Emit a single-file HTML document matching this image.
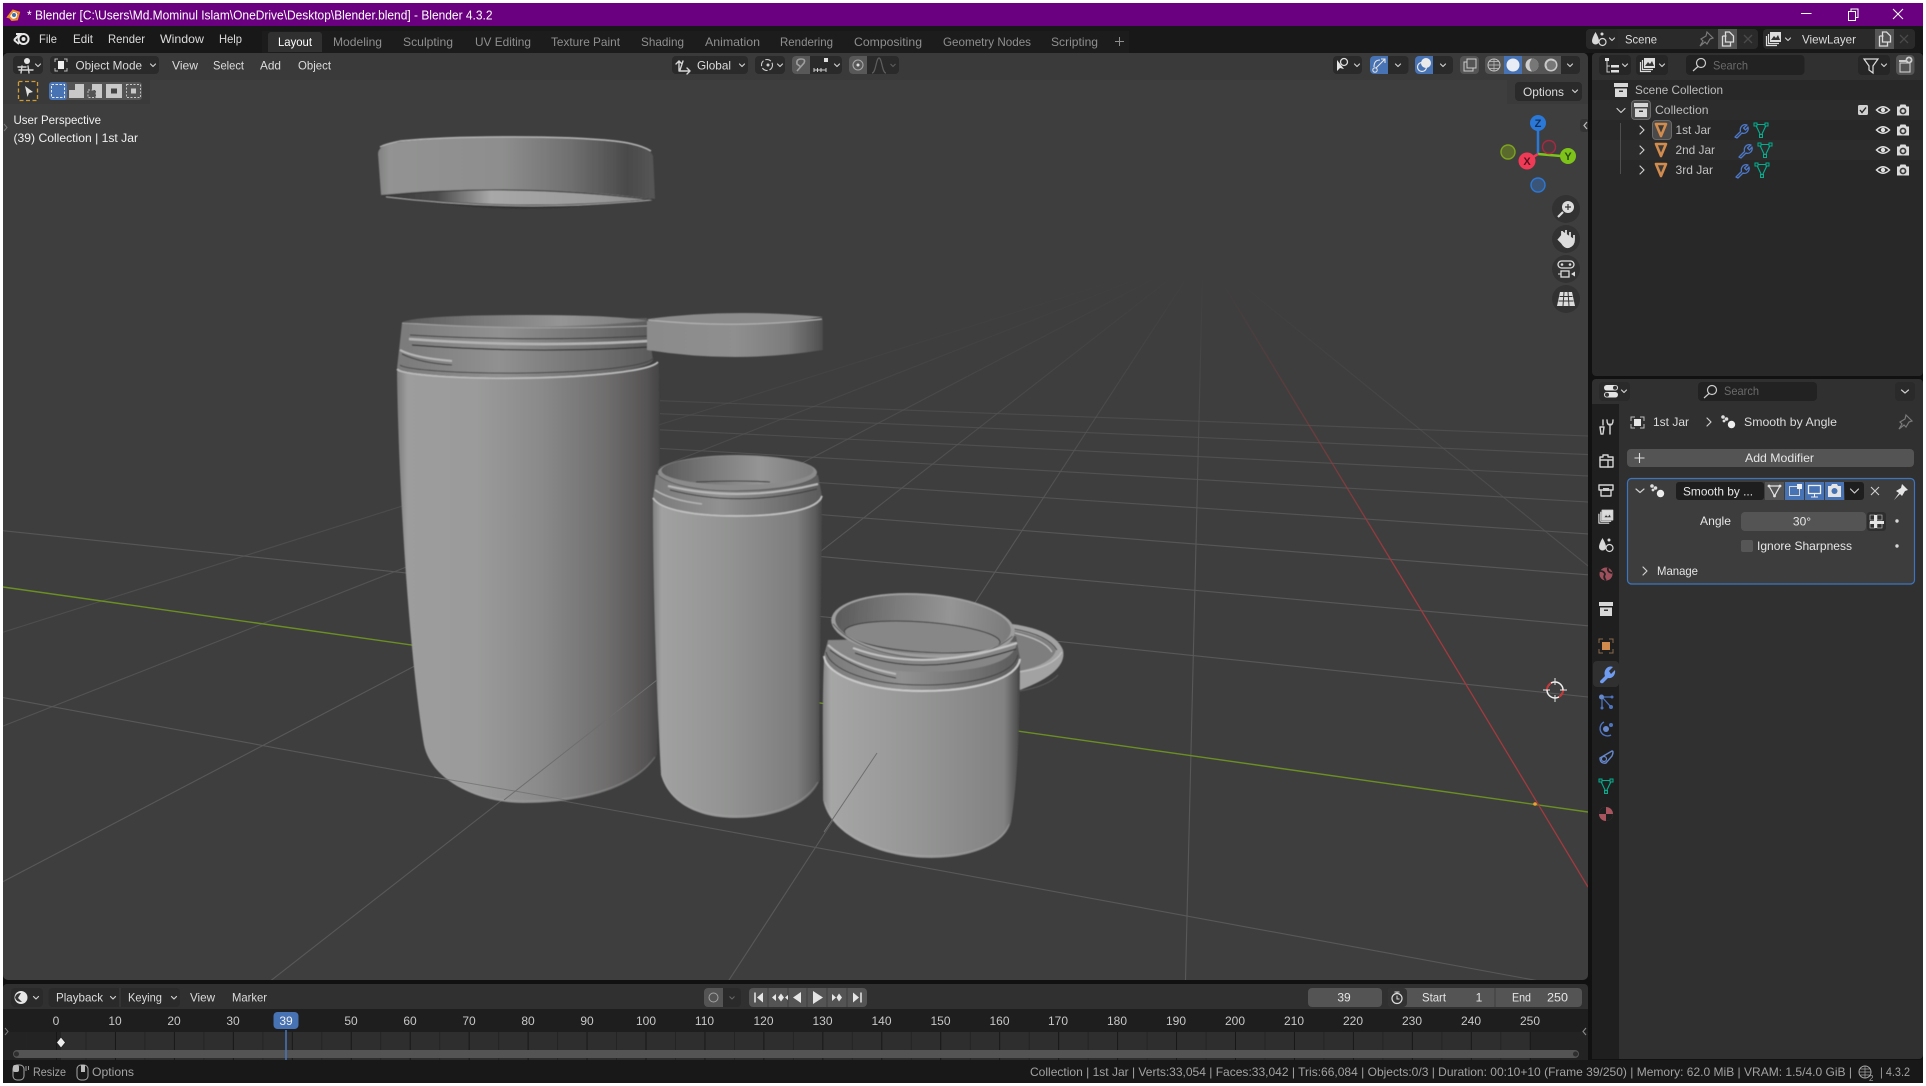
<!DOCTYPE html>
<html><head><meta charset="utf-8"><title>Blender</title>
<style>
html,body{margin:0;padding:0;background:#fff;overflow:hidden}
svg{display:block}
text{font-family:"Liberation Sans",sans-serif;font-size:12px;fill:#c8c8c8}
.m{fill:#dcdcdc}.t{fill:#8f8f8f}.s{fill:#a2a2a2}.w{fill:#e6e6e6}.d{fill:#6a6a6a}
.c{fill:none;stroke:#cfcfcf;stroke-width:1.2;stroke-linecap:round;stroke-linejoin:round}
.i{fill:none;stroke:#d4d4d4;stroke-width:1.4;stroke-linecap:round;stroke-linejoin:round}
.o{stroke:#6e6e6e;stroke-width:1;fill:none}
</style></head><body>
<svg xmlns="http://www.w3.org/2000/svg" width="1926" height="1086" viewBox="0 0 1926 1086">
<defs>
<filter id="soft" filterUnits="userSpaceOnUse" x="350" y="110" width="760" height="770"><feGaussianBlur stdDeviation=".55"/></filter>
<linearGradient id="gridfade" gradientUnits="userSpaceOnUse" x1="0" y1="270" x2="0" y2="560"><stop offset="0" stop-color="#555" stop-opacity="0"/><stop offset=".25" stop-color="#555" stop-opacity=".25"/><stop offset=".65" stop-color="#555" stop-opacity=".8"/><stop offset="1" stop-color="#585858"/></linearGradient>
<linearGradient id="j1"><stop offset="0" stop-color="#7d7d7d"/><stop offset=".04" stop-color="#9c9d9c"/><stop offset=".3" stop-color="#9a9b9a"/><stop offset=".55" stop-color="#8a8a8a"/><stop offset=".8" stop-color="#6f6d6d"/><stop offset=".95" stop-color="#565454"/><stop offset="1" stop-color="#444"/></linearGradient>
<linearGradient id="j2"><stop offset="0" stop-color="#808080"/><stop offset=".05" stop-color="#a0a1a0"/><stop offset=".45" stop-color="#929392"/><stop offset=".85" stop-color="#7d7d7d"/><stop offset=".96" stop-color="#5c5c5c"/><stop offset="1" stop-color="#454545"/></linearGradient>
<linearGradient id="j3"><stop offset="0" stop-color="#858585"/><stop offset=".04" stop-color="#a5a6a5"/><stop offset=".5" stop-color="#949594"/><stop offset=".92" stop-color="#828282"/><stop offset=".98" stop-color="#555"/><stop offset="1" stop-color="#444"/></linearGradient>
<linearGradient id="lid"><stop offset="0" stop-color="#808180"/><stop offset=".04" stop-color="#929392"/><stop offset=".45" stop-color="#8d8e8d"/><stop offset=".7" stop-color="#6f6f6f"/><stop offset=".9" stop-color="#4a4a4a"/><stop offset="1" stop-color="#565656"/></linearGradient>
<linearGradient id="lid2"><stop offset="0" stop-color="#8a8b8a"/><stop offset=".5" stop-color="#8e8f8e"/><stop offset=".8" stop-color="#7c7c7c"/><stop offset=".96" stop-color="#585858"/><stop offset="1" stop-color="#4c4c4c"/></linearGradient>
<linearGradient id="under"><stop offset="0" stop-color="#3a3a3a"/><stop offset=".2" stop-color="#4a4a4a"/><stop offset=".4" stop-color="#a8a8a8"/><stop offset=".8" stop-color="#9a9a9a"/><stop offset="1" stop-color="#8a8a8a"/></linearGradient>
<linearGradient id="in"><stop offset="0" stop-color="#5a5a5a"/><stop offset=".35" stop-color="#7c7c7c"/><stop offset=".65" stop-color="#959595"/><stop offset="1" stop-color="#7a7a7a"/></linearGradient>
<linearGradient id="neck"><stop offset="0" stop-color="#7a7a7a"/><stop offset=".4" stop-color="#919191"/><stop offset=".8" stop-color="#6e6e6e"/><stop offset="1" stop-color="#5a5a5a"/></linearGradient>
<linearGradient id="redfade" gradientUnits="userSpaceOnUse" x1="1222" y1="282" x2="1400" y2="575"><stop offset="0" stop-color="#8a3a3a" stop-opacity="0"/><stop offset="1" stop-color="#a23a3e"/></linearGradient>
<pattern id="ticks" patternUnits="userSpaceOnUse" x="56" y="0" width="58.95" height="100"><rect x="0" y="0" width="1" height="100" fill="#171717"/><rect x="29.5" y="0" width="1" height="100" fill="#232323"/></pattern>
<g id="eye"><path d="M-6.5 0Q0-6.5 6.5 0Q0 6.5-6.5 0Z" fill="none" stroke="#e0e0e0" stroke-width="1.5"/><circle r="2.2" fill="#e0e0e0"/></g>
<g id="cam"><path d="M-6-3.5h2.5l1-2h5l1 2H6v9H-6Z" fill="#dcdcdc"/><circle cy="1" r="3.4" fill="#3a3a3a"/><circle cy="1" r="1.7" fill="#dcdcdc"/></g>
<g id="wr"><path d="M-6 7L-.5 1.5C-1.5-2.5 1.5-6.5 6-5L2.5-2 4.5 0 7-3C8 1 4.5 4.5 1 3L-4 8Z" fill="none" stroke="#4d78c9" stroke-width="1.3" stroke-linejoin="round"/></g>
<g id="mt"><path d="M-5.5-5.5H5.500L0 6Z" fill="none" stroke="#00b090" stroke-width="1.1"/><rect x="-7" y="-7" width="3" height="3" fill="#282828" stroke="#00b090" stroke-width="1"/><rect x="4" y="-7" width="3" height="3" fill="#282828" stroke="#00b090" stroke-width="1"/><rect x="-1.500" y="4.500" width="3" height="3" fill="#282828" stroke="#00b090" stroke-width="1"/></g>
<g id="ot"><path d="M-5-6H5L0 6Z" fill="#3a3a3a" stroke="#d18b4c" stroke-width="2.6" stroke-linejoin="round"/></g>
<g id="coll"><path d="M-7-7H7V-3H-7Z" fill="#d8d8d8"/><path d="M-6-1.5H6V7H-6Z" fill="#d8d8d8"/><rect x="-2" y="0.5" width="4" height="1.5" fill="#333"/></g>
<g id="smooth"><circle cx="-5" cy="-5" r="1.8" fill="#ddd"/><circle cx="-1.5" cy="-3" r="1.8" fill="#ddd"/><circle cx="-4" cy="-1" r="1.4" fill="#ddd"/><circle cx="3.5" cy="2.5" r="3.7" fill="#eee"/></g>
<g id="vl"><rect x="-4" y="-7" width="11" height="10" fill="#ddd"/><path d="M-3 1L0-3 2-1 4-4 6 1Z" fill="#333"/><path d="M-5.5-5V4.5H5M-7.5-3V6.5H3" fill="none" stroke="#ddd" stroke-width="1.2"/></g>
<g id="sc"><path d="M-3.5-7Q-7-1-7 2A3.500 3.500 0 0 0 0 2Q0-1-3.5-7Z" fill="#d8d8d8"/><circle cx="3.5" cy="3" r="3.5" fill="none" stroke="#d8d8d8" stroke-width="1.2"/><circle cx="3" cy="-5" r="1.5" fill="#d8d8d8"/></g>
<g id="copy"><path d="M-5-3H-1M-5-3V7H3V3M-2-7H2L6-3V3H-2Z" fill="none" stroke="#dcdcdc" stroke-width="1.3"/></g>
<g id="pin"><path d="M1-7L7-1 4 0 1 5-1 3-6 7-3 2-5 0 0-3Z" fill="none" stroke="#7a7a7a" stroke-width="1.2"/></g>
</defs>

<rect width="1926" height="1086" fill="#fff"/>
<rect x="3" y="3" width="1920" height="1080" fill="#111"/>
<rect x="3" y="3" width="1920" height="23" fill="#6a007f"/>
<rect x="3" y="26" width="1920" height="27" fill="#181818"/>

<!-- title bar -->
<circle cx="13.5" cy="15" r="4" fill="#f5f5f5"/><circle cx="14" cy="15" r="2" fill="#3f6fa8"/><path d="M8 17L13 10.5 19 12.5 17 19.5 12 20 10 17.5Z" fill="none" stroke="#ec8a24" stroke-width="2"/>
<text x="27" y="19.5" class="w" style="font-size:13px;fill:#fff" textLength="465.5" lengthAdjust="spacingAndGlyphs">* Blender [C:\Users\Md.Mominul Islam\OneDrive\Desktop\Blender.blend] - Blender 4.3.2</text>
<path d="M1801 13.5H1811.5" stroke="#fff" stroke-width="1"/>
<path d="M1848.5 11.5H1855.5V20.5H1848.5ZM1851 11.5V9H1858V17.5H1855.5" fill="none" stroke="#fff" stroke-width="1"/>
<path d="M1893 9L1903 19M1903 9L1893 19" stroke="#fff" stroke-width="1"/>

<!-- top bar -->
<g transform="translate(21,39)"><circle cx="2.5" cy="0" r="5" fill="none" stroke="#e8e8e8" stroke-width="2"/><circle cx="2.5" cy="0" r="2" fill="#e8e8e8"/><path d="M-7 1L-1-5H-5M-7 1L-2 5" fill="none" stroke="#e8e8e8" stroke-width="2"/></g>
<text x="39" y="43" class="m" textLength="18" lengthAdjust="spacingAndGlyphs">File</text>
<text x="73" y="43" class="m" textLength="20" lengthAdjust="spacingAndGlyphs">Edit</text>
<text x="108" y="43" class="m" textLength="37" lengthAdjust="spacingAndGlyphs">Render</text>
<text x="160" y="43" class="m" textLength="44" lengthAdjust="spacingAndGlyphs">Window</text>
<text x="219" y="43" class="m" textLength="23" lengthAdjust="spacingAndGlyphs">Help</text>
<rect x="262" y="31" width="867" height="22" fill="#1c1c1c"/>
<path d="M268 52V35a3 3 0 0 1 3-3H319a3 3 0 0 1 3 3V52Z" fill="#303030"/>
<text x="278" y="46" class="w" style="fill:#fff" textLength="34" lengthAdjust="spacingAndGlyphs">Layout</text>
<text x="333" y="46" class="t" textLength="49" lengthAdjust="spacingAndGlyphs">Modeling</text>
<text x="403" y="46" class="t" textLength="50" lengthAdjust="spacingAndGlyphs">Sculpting</text>
<text x="475" y="46" class="t" textLength="56" lengthAdjust="spacingAndGlyphs">UV Editing</text>
<text x="551" y="46" class="t" textLength="69" lengthAdjust="spacingAndGlyphs">Texture Paint</text>
<text x="641" y="46" class="t" textLength="43" lengthAdjust="spacingAndGlyphs">Shading</text>
<text x="705" y="46" class="t" textLength="55" lengthAdjust="spacingAndGlyphs">Animation</text>
<text x="780" y="46" class="t" textLength="53" lengthAdjust="spacingAndGlyphs">Rendering</text>
<text x="854" y="46" class="t" textLength="68" lengthAdjust="spacingAndGlyphs">Compositing</text>
<text x="943" y="46" class="t" textLength="88" lengthAdjust="spacingAndGlyphs">Geometry Nodes</text>
<text x="1051" y="46" class="t" textLength="47" lengthAdjust="spacingAndGlyphs">Scripting</text>
<path d="M1115 41.5H1124M1119.500 37V46" stroke="#8f8f8f" stroke-width="1"/>

<!-- scene/viewlayer -->
<rect x="1586" y="29" width="172" height="20" rx="4" fill="#2a2a2a"/>
<rect x="1586" y="29" width="32" height="20" rx="4" fill="#282828"/>
<use href="#sc" transform="translate(1599,39)"/><path class="c" d="M1609.5 38l2.5 2.5 2.5-2.5"/>
<text x="1625" y="43.5" class="m" textLength="32" lengthAdjust="spacingAndGlyphs">Scene</text>
<use href="#pin" transform="translate(1706,39)"/>
<rect x="1718" y="29" width="19" height="20" fill="#555"/><use href="#copy" transform="translate(1727.5,39)"/>
<path d="M1744 35L1752 43M1752 35L1744 43" stroke="#4a4a4a" stroke-width="1.3"/>
<rect x="1763" y="29" width="152" height="20" rx="4" fill="#2a2a2a"/>
<use href="#vl" transform="translate(1774,39)"/><path class="c" d="M1785.5 38l2.5 2.5 2.5-2.5"/>
<text x="1802" y="43.5" class="m" textLength="54" lengthAdjust="spacingAndGlyphs">ViewLayer</text>
<rect x="1875" y="29" width="19" height="20" fill="#555"/><use href="#copy" transform="translate(1884.5,39)"/>
<path d="M1900 35L1908 43M1908 35L1900 43" stroke="#4a4a4a" stroke-width="1.3"/>

<!-- VIEWPORT -->
<clipPath id="vp"><rect x="3" y="53" width="1585" height="927" rx="5"/></clipPath>
<g clip-path="url(#vp)">
<rect x="3" y="53" width="1585" height="927" fill="#3e3e3e"/>
<!-- grid family B (to VP 1203,253) -->
<g fill="none" stroke="url(#gridfade)" stroke-width="1.1">
<path d="M246 1000L1203 253"/><path d="M716 1000L1203 253"/><path d="M1185 1000L1203 253"/>
<path d="M-223 1000L1203 253"/><path d="M-692 1000L1203 253" opacity=".8"/><path d="M-1161 1000L1203 253" opacity=".6"/>
<path d="M2122 1000L1203 253" opacity=".7"/>
</g>
<!-- grid family A (to VP -2634,211) -->
<g fill="none" stroke="url(#gridfade)" stroke-width="1.1">
<path d="M3 697.600L1588 990"/>
<path d="M3 530.700L1588 697"/>
<path d="M660 542L1588 625.800"/>
<path d="M660 502L1588 574.800"/>
<path d="M660 472L1588 533.900"/>
<path d="M660 448.400L1588 502"/>
<path d="M660 429.800L1588 476"/>
<path d="M660 413.700L1588 454.600"/>
<path d="M660 400.700L1588 436"/>
</g>
<!-- axes -->
<path d="M3 587L1588 812" stroke="#6b8f22" stroke-width="1.4"/>
<path d="M1222 282L1400 575" stroke="url(#redfade)" stroke-width="1.3" fill="none"/>
<path d="M1400 575L1588 887" stroke="#a23a3e" stroke-width="1.3"/>
<circle cx="1535" cy="804" r="1.8" fill="#f0a030"/>

<g filter="url(#soft)">
<!-- top lid -->
<path d="M381 193Q510 222 655 197L655 199Q510 216 381 195Z" fill="#333"/>
<path d="M383 195Q510 180 652 199Q510 212 383 195Z" fill="url(#under)"/>
<path d="M386 197Q520 213 652 200" fill="none" stroke="#a8a8a8" stroke-width="1"/>
<path d="M378 154Q378 146 392 143C440 136 560 134 618 142Q650 146 653 156L655 199Q510 182 381 195Z" fill="url(#lid)"/>
<path d="M380 147Q385 144 400 141C450 136 560 135 615 141Q640 144 651 151" fill="none" stroke="#b3b3b3" stroke-width="1.400"/>
<path d="M383 196Q510 182 654 200" fill="none" stroke="#3a3a3a" stroke-width="1.100"/>

<!-- jar 1 -->
<path d="M397 376C399 500 410 660 424 745C432 782 480 803 523 803C590 803 640 785 657 755C660 650 660 500 659 364C650 370 590 376 527 377C470 378 410 378 397 370Z" fill="url(#j1)"/>
<path d="M402 323L397 368C402 374 460 378 527 377C590 376 650 370 653 360L647 318Z" fill="url(#neck)"/>
<path d="M402 322Q420 315 525 315Q620 315 647 321Q530 332 402 322Z" fill="url(#in)"/>
<path d="M402 323Q520 331 647 326" fill="none" stroke="#a0a0a0" stroke-width="1"/>
<path d="M410 335Q530 342 648 336" fill="none" stroke="#3e3e3e" stroke-width="1"/>
<path d="M409 339Q530 348 648 341" fill="none" stroke="#b4b4b4" stroke-width="2.600"/>
<path d="M412 345Q530 354 648 347" fill="none" stroke="#333" stroke-width="1.200"/>
<path d="M400 350Q415 358 452 361" fill="none" stroke="#b8b8b8" stroke-width="2"/>
<path d="M402 354Q420 363 452 365" fill="none" stroke="#444" stroke-width="1"/>
<path d="M397 369C402 375 460 379 527 378C590 377 650 371 658 362" fill="none" stroke="#bcbcbc" stroke-width="1.800"/>
<path d="M400 365C406 370 465 374 527 373C590 372 645 367 654 358" fill="none" stroke="#454545" stroke-width="1"/>
<path d="M426 750C436 782 480 801 523 801C590 801 636 784 655 757" fill="none" stroke="#aaa" stroke-width="1.200" opacity=".35"/>

<!-- lid 2 -->
<path d="M647 321L647 350Q735 364 823 350L823 320Q730 310 647 321Z" fill="url(#lid2)"/>
<path d="M647 319Q730 308 823 317Q735 330 647 319Z" fill="#8b8b8b"/>
<path d="M648 320Q735 329 822 319" fill="none" stroke="#b0b0b0" stroke-width="1.200"/>

<!-- jar 2 -->
<path d="M653 505C653 600 658 720 661 775C670 805 700 818 736 818C775 818 810 805 820 780C818 700 822 600 822 498C818 510 780 515 737 515C695 515 660 510 653 499Z" fill="url(#j2)"/>
<path d="M656 475L653 498C660 510 695 515 737 515C780 515 818 510 822 496L818 475Z" fill="url(#neck)"/>
<ellipse cx="737.500" cy="472.500" rx="79.500" ry="17.500" fill="#8a8b8a"/>
<ellipse cx="737.500" cy="470.500" rx="76" ry="14.500" fill="url(#in)"/>
<path d="M696 482Q737 480 770 482" fill="none" stroke="#3a3a3a" stroke-width="1.100"/>
<path d="M659 476Q680 491 737 491Q800 490 817 476" fill="none" stroke="#5a5a5a" stroke-width="1"/>
<path d="M668 486Q740 503 818 484" fill="none" stroke="#b8b8b8" stroke-width="2"/>
<path d="M670 490Q740 508 817 489" fill="none" stroke="#3c3c3c" stroke-width="1.100"/>
<path d="M655 490Q670 500 702 504" fill="none" stroke="#b4b4b4" stroke-width="1.600"/>
<path d="M653 498C660 510 695 516 737 516C780 516 818 510 822 496" fill="none" stroke="#c0c0c0" stroke-width="1.700"/>
<path d="M663 778C672 803 700 816 736 816C775 816 806 803 818 782" fill="none" stroke="#b0b0b0" stroke-width="1.200" opacity=".35"/>

<!-- back lid -->
<path d="M1012 624Q1055 630 1063 650Q1068 672 1020 690L1005 660Z" fill="#a2a2a2"/>
<path d="M1012 630Q1048 636 1056 650Q1052 665 1015 672Z" fill="#7e7e7e"/>
<path d="M1014 629Q1048 635 1057 650" fill="none" stroke="#444" stroke-width="1"/>
<path d="M1015 633Q1045 640 1052 652" fill="none" stroke="#bcbcbc" stroke-width="1.300"/>
<path d="M1018 672Q1052 668 1062 652" fill="none" stroke="#bcbcbc" stroke-width="1.400"/>
<path d="M1058 675Q1048 686 1020 691" fill="none" stroke="#5a5a5a" stroke-width="1"/>

<!-- jar 3 -->
<path d="M824 660C822 700 823 760 823 800C830 835 880 858 931 858C970 858 1005 845 1011 822C1018 780 1020 720 1020 660C1017 678 975 690 922 690C870 690 826 675 824 655Z" fill="url(#j3)"/>
<path d="M828 640L824 655C826 675 870 690 922 690C975 690 1017 678 1020 658L1016 636Z" fill="url(#neck)"/>
<path d="M828 640C828 662 880 672 923 672C970 672 1015 665 1017 642Z" fill="#858685"/>
<g transform="rotate(4 923 626)">
<ellipse cx="923" cy="626" rx="92" ry="32.500" fill="#9c9d9c"/>
<ellipse cx="923" cy="625" rx="88" ry="29.500" fill="url(#in)"/>
<clipPath id="flr"><ellipse cx="923" cy="625" rx="88" ry="29.500"/></clipPath>
<ellipse cx="923" cy="637" rx="78" ry="15" fill="#868786" stroke="#3e3e3e" stroke-width="1" clip-path="url(#flr)"/>
<path d="M833 630Q860 658 923 658Q985 658 1013 630" fill="none" stroke="#5a5a5a" stroke-width="1"/>
</g>
<path d="M853 648Q923 674 1017 643" fill="none" stroke="#c4c4c4" stroke-width="2"/>
<path d="M855 653Q923 679 1016 649" fill="none" stroke="#383838" stroke-width="1.200"/>
<path d="M828 645Q850 665 896 674" fill="none" stroke="#bcbcbc" stroke-width="1.900"/>
<path d="M830 650Q855 670 896 678" fill="none" stroke="#3c3c3c" stroke-width="1"/>
<path d="M824 656C826 676 870 691 922 691C975 691 1017 679 1020 659" fill="none" stroke="#c8c8c8" stroke-width="2"/>
<path d="M826 652C830 670 870 685 922 685C975 685 1014 674 1018 655" fill="none" stroke="#444" stroke-width="1"/>
<path d="M825 802C832 833 880 856 931 856C970 856 1002 844 1009 824" fill="none" stroke="#b8b8b8" stroke-width="1.200" opacity=".35"/>
</g>

<!-- ground overlays on jars -->
<path d="M434 777L566 800" class="o" opacity=".7"/>
<path d="M504 800L657 680" class="o"/>
<path d="M877 753L824 832" class="o"/>

<!-- 3D cursor -->
<circle cx="1555" cy="690" r="8" fill="none" stroke="#f0f0f0" stroke-width="1.5"/>
<path d="M1555 690m-8 0a8 8 0 0 1 4-7M1555 690m8 0a8 8 0 0 1-4 7" fill="none" stroke="#d83030" stroke-width="1.7"/>
<path d="M1555 678V685M1555 695V702M1543 690H1550M1560 690H1567" stroke="#e8e8e8" stroke-width="1"/>

<!-- header -->
<rect x="3" y="53" width="1585" height="27" fill="#3a3a3a"/>
<rect x="3" y="80" width="147" height="24" fill="#3a3a3a"/>
<rect x="1507" y="80" width="81" height="24" fill="#3a3a3a"/>

<!-- left header -->
<rect x="13" y="56" width="30" height="18" rx="4" fill="#2a2a2a"/>
<circle cx="27" cy="61" r="3" fill="#e6e6e6"/><path class="i" d="M19 70H33M22 66L21 73M28 66L29 73M18 67H26" stroke-width="1"/>
<path class="c" d="M35.5 64l2.5 2.5 2.5-2.5"/>
<rect x="50" y="56" width="109" height="18" rx="4" fill="#2a2a2a"/>
<path d="M55 62V59H58M64 59H67V62M55 68V71H58M67 68V71H64" fill="none" stroke="#bbb" stroke-width="1"/><rect x="58" y="61" width="6" height="8" fill="#eee"/>
<text x="75.5" y="69.5" class="m" textLength="66.5" lengthAdjust="spacingAndGlyphs">Object Mode</text>
<path class="c" d="M150.5 64l2.5 2.5 2.5-2.5"/>
<text x="172" y="69.5" class="m" textLength="26" lengthAdjust="spacingAndGlyphs">View</text>
<text x="213" y="69.5" class="m" textLength="31" lengthAdjust="spacingAndGlyphs">Select</text>
<text x="260" y="69.5" class="m" textLength="21" lengthAdjust="spacingAndGlyphs">Add</text>
<text x="298" y="69.5" class="m" textLength="33" lengthAdjust="spacingAndGlyphs">Object</text>

<!-- tool row -->
<rect x="18.5" y="81.5" width="19" height="19" fill="#333" stroke="#d09a35" stroke-width="1.3" stroke-dasharray="4 2.5"/>
<path d="M25 86L33 92 29 93 27.5 97Z" fill="#e0e0e0"/>
<rect x="49" y="82" width="93" height="18" rx="3" fill="#545454"/>
<rect x="49" y="82" width="18" height="18" rx="3" fill="#4772b3"/>
<rect x="51.500" y="84.500" width="13" height="13" fill="none" stroke="#e8e8e8" stroke-width="1" stroke-dasharray="2.500 1.500"/>
<path d="M69 90H75V84H84V98H69Z" fill="#c8c8c8"/>
<path d="M92 84H102V98H96V90H92Z" fill="#c8c8c8"/><rect x="88" y="90" width="8" height="7.500" fill="none" stroke="#c8c8c8" stroke-width=".9" stroke-dasharray="2 1.500"/>
<path d="M106 84H122V98H106Z" fill="#c8c8c8"/><rect x="111" y="88.500" width="6" height="5" fill="#444"/>
<rect x="126.500" y="84.500" width="14" height="13" fill="none" stroke="#c8c8c8" stroke-width=".9" stroke-dasharray="2 1.500"/><rect x="131" y="88.500" width="5" height="5" fill="#c8c8c8"/>

<!-- overlay text -->
<text x="13.5" y="124" style="fill:#f0f0f0" textLength="87.5" lengthAdjust="spacingAndGlyphs">User Perspective</text>
<text x="13.5" y="142" style="fill:#f0f0f0" textLength="124.5" lengthAdjust="spacingAndGlyphs">(39) Collection | 1st Jar</text>
<path d="M4 124l3 3.5-3 3.5" fill="none" stroke="#777" stroke-width="1"/>

<!-- center header -->
<rect x="672" y="56" width="76" height="18" rx="4" fill="#2a2a2a"/>
<path class="i" d="M679 61L676 64M679 61L682 64M679 61V71H690M687 68L690 71 687 74M683 61L680 70" stroke-width="1.100"/>
<text x="697" y="69.5" class="m" textLength="34" lengthAdjust="spacingAndGlyphs">Global</text>
<path class="c" d="M739.5 64l2.5 2.5 2.5-2.5"/>
<rect x="755" y="56" width="30" height="18" rx="4" fill="#2a2a2a"/>
<circle cx="767" cy="65" r="5.5" fill="none" stroke="#cfcfcf" stroke-width="1.1" stroke-dasharray="6 2"/><circle cx="768" cy="65" r="1.5" fill="#cfcfcf"/>
<path class="c" d="M777.5 64l2.5 2.5 2.5-2.5"/>
<rect x="792" y="56" width="50" height="18" rx="4" fill="#2a2a2a"/>
<path d="M792 60a4 4 0 0 1 4-4H810V74H796a4 4 0 0 1-4-4Z" fill="#585858"/>
<path d="M797 71L804 63Q806 59 801 59Q796 59 797 64L801 67" fill="none" stroke="#9e9e9e" stroke-width="1.6"/>
<path d="M814 68V72M814 70H826M817.5 68V72M821 68V72M826 68V72" stroke="#cfcfcf" stroke-width="1" fill="none"/><rect x="824" y="58" width="4" height="4" fill="#e0e0e0"/>
<path class="c" d="M834.5 64l2.5 2.5 2.5-2.5"/>
<rect x="849" y="56" width="50" height="18" rx="4" fill="#2a2a2a"/>
<path d="M849 60a4 4 0 0 1 4-4H867V74H853a4 4 0 0 1-4-4Z" fill="#585858"/>
<circle cx="858" cy="65" r="5" fill="none" stroke="#a6a6a6" stroke-width="1.1"/><circle cx="858" cy="65" r="1.5" fill="#e0e0e0"/>
<path d="M872 73C876 73 876 58 879 58S882 73 886 73" fill="none" stroke="#5e5e5e" stroke-width="1.2"/>
<path d="M890.5 64l2.5 2.500 2.500-2.500" fill="none" stroke="#5e5e5e" stroke-width="1.1"/>

<!-- right header -->
<rect x="1333" y="56" width="29" height="18" rx="4" fill="#2a2a2a"/>
<circle cx="1344" cy="62" r="3.5" fill="none" stroke="#ddd" stroke-width="1.3"/><path d="M1337 60L1337 71 1340 68 1344 69Z" fill="#e6e6e6"/>
<path class="c" d="M1354.5 64l2.5 2.5 2.5-2.5"/>
<rect x="1370" y="56" width="38.5" height="18" rx="4" fill="#2a2a2a"/>
<path d="M1370 60a4 4 0 0 1 4-4H1388V74H1374a4 4 0 0 1-4-4Z" fill="#4772b3"/>
<circle cx="1375" cy="70" r="2.2" fill="none" stroke="#ddd" stroke-width="1.1"/><path d="M1376 68L1385 59M1381 59H1385V63M1374 67Q1374 60 1380 60" fill="none" stroke="#e6e6e6" stroke-width="1.1"/>
<path class="c" d="M1395.5 64l2.5 2.5 2.5-2.5"/>
<rect x="1415" y="56" width="38" height="18" rx="4" fill="#2a2a2a"/>
<path d="M1415 60a4 4 0 0 1 4-4H1433V74H1419a4 4 0 0 1-4-4Z" fill="#4772b3"/>
<circle cx="1426" cy="63" r="5" fill="#eaeaea"/><circle cx="1422" cy="67" r="4.5" fill="none" stroke="#e8e8e8" stroke-width="1.2"/>
<path class="c" d="M1440.5 64l2.5 2.5 2.5-2.5"/>
<rect x="1460" y="56" width="19" height="18" rx="4" fill="#555"/>
<path d="M1467 59H1476V68H1473V71H1464V62H1467ZM1467 62V68H1473" fill="none" stroke="#ccc" stroke-width="1"/>
<rect x="1485" y="56" width="95" height="18" rx="4" fill="#2a2a2a"/>
<path d="M1485 60a4 4 0 0 1 4-4H1561V74H1489a4 4 0 0 1-4-4Z" fill="#555"/>
<rect x="1504" y="56" width="18" height="18" fill="#4772b3"/>
<circle cx="1494" cy="65" r="6" fill="none" stroke="#c4c4c4" stroke-width="1"/><path d="M1488 65H1500M1494 59V71M1489.5 61.5H1498.5M1489.5 68.5H1498.5" stroke="#c4c4c4" stroke-width=".7"/>
<circle cx="1513" cy="65" r="6.5" fill="#e8ecf4"/>
<circle cx="1532" cy="65" r="6.5" fill="#d0d0d0"/><path d="M1532 58.5A6.5 6.5 0 0 1 1532 71.5Q1527 65 1532 58.5Z" fill="#777"/>
<circle cx="1551" cy="65" r="6.5" fill="#c8c8c8"/><circle cx="1551" cy="65" r="5" fill="#777"/><path d="M1547 68A5 5 0 0 1 1554 61" fill="none" stroke="#ccc" stroke-width="1"/>
<path class="c" d="M1567.5 64l2.5 2.5 2.5-2.5"/>

<!-- options -->
<rect x="1515" y="82" width="67" height="19" rx="4" fill="#2a2a2a"/>
<text x="1523" y="96" class="m" textLength="41" lengthAdjust="spacingAndGlyphs">Options</text>
<path class="c" d="M1572.5 90l2.5 2.5 2.5-2.5"/>

<!-- gizmo -->
<rect x="1580" y="119" width="9" height="13" rx="3" fill="#333"/><path d="M1587 122l-3 3.5 3 3.5" fill="none" stroke="#bbb" stroke-width="1.2"/>
<path d="M1538 154V125" stroke="#2a78d8" stroke-width="2.5"/>
<path d="M1538 154L1561 156" stroke="#7ec31a" stroke-width="2.5"/>
<path d="M1538 154L1530 159" stroke="#f13a55" stroke-width="2.5"/>
<circle cx="1508" cy="152" r="7" fill="#5a6a2d" stroke="#7ea41e" stroke-width="1.4"/>
<circle cx="1549" cy="147" r="6.5" fill="#4a3c3e" stroke="#a52a42" stroke-width="1.4"/>
<circle cx="1538" cy="185" r="7" fill="#3b5578" stroke="#2a78d8" stroke-width="1.4"/>
<circle cx="1538" cy="123" r="8" fill="#2a78d8"/>
<circle cx="1527" cy="161" r="8.5" fill="#f13a55"/>
<circle cx="1568" cy="156" r="8" fill="#7ec31a"/>
<text x="1538" y="127" text-anchor="middle" style="font-size:11px;font-weight:bold;fill:#13305a">Z</text>
<text x="1527" y="165" text-anchor="middle" style="font-size:11px;font-weight:bold;fill:#5a1020">X</text>
<text x="1568" y="160" text-anchor="middle" style="font-size:11px;font-weight:bold;fill:#2a4a08">Y</text>

<!-- nav buttons -->
<circle cx="1566" cy="209" r="14" fill="#323232"/><circle cx="1566" cy="239" r="14" fill="#323232"/><circle cx="1566" cy="269" r="14" fill="#323232"/><circle cx="1566" cy="299" r="14" fill="#323232"/>
<circle cx="1568" cy="207" r="6" fill="#ddd"/><path d="M1563 212L1558 217" stroke="#ddd" stroke-width="2.2"/><path d="M1565 207H1571M1568 204V210" stroke="#333" stroke-width="1.2"/>
<path d="M1558 239L1562 243V234M1562 238V231M1566 238V230M1570 238V232M1574 240V235M1562 243Q1565 248 1569 247Q1574 245 1574 240L1562 232Z" fill="#dcdcdc" stroke="#dcdcdc" stroke-width="1.8" stroke-linejoin="round"/>
<rect x="1558" y="261" width="16" height="7" rx="3.5" fill="none" stroke="#ddd" stroke-width="1.3"/><circle cx="1562" cy="264.5" r="1.3" fill="#ddd"/><circle cx="1570" cy="264.5" r="1.3" fill="#ddd"/><rect x="1561" y="271" width="8" height="6" fill="none" stroke="#ddd" stroke-width="1.3"/><path d="M1571 274L1575 271.500V276.500Z" fill="#ddd"/><path d="M1558 274H1561" stroke="#ddd"/>
<path d="M1560 292H1572L1575 306H1557Z" fill="#ddd"/><path d="M1559.5 296.5H1572.5M1558.5 301H1573.5M1564 292L1563 306M1568 292L1569 306" stroke="#323232" stroke-width="1"/>
</g>

<!-- OUTLINER -->
<rect x="1592" y="53" width="331" height="323" rx="4" fill="#282828"/>
<path d="M1592 80V57a4 4 0 0 1 4-4H1919a4 4 0 0 1 4 4V80Z" fill="#303030"/>
<rect x="1599" y="55" width="32" height="20" rx="4" fill="#262626"/>
<rect x="1605" y="58" width="4" height="3" fill="#e0e0e0"/><path d="M1607 61V72H1610M1607 66H1610" stroke="#ccc" fill="none"/><rect x="1611" y="65" width="8" height="2.5" fill="#e0e0e0"/><rect x="1611" y="70" width="8" height="2.5" fill="#e0e0e0"/>
<path class="c" d="M1622.5 64l2.5 2.5 2.5-2.5"/>
<rect x="1636" y="55" width="32" height="20" rx="4" fill="#262626"/>
<use href="#vl" transform="translate(1648,65)"/><path class="c" d="M1659.5 64l2.5 2.5 2.5-2.5"/>
<rect x="1686" y="55" width="118.5" height="20" rx="4" fill="#222"/>
<circle cx="1701" cy="63" r="4.5" fill="none" stroke="#ccc" stroke-width="1.2"/><path d="M1698 66.5L1693 71" stroke="#ccc" stroke-width="1.2"/>
<text x="1713" y="69.5" class="d" textLength="35" lengthAdjust="spacingAndGlyphs">Search</text>
<rect x="1858" y="55" width="32" height="20" rx="4" fill="#262626"/>
<path d="M1864 59H1878L1873 66V73L1869 70V66Z" fill="none" stroke="#ddd" stroke-width="1.2"/><path class="c" d="M1881.5 64l2.5 2.5 2.5-2.5"/>
<rect x="1896" y="55" width="18.5" height="20" rx="4" fill="#545454"/>
<rect x="1900" y="63" width="10" height="9" fill="none" stroke="#ccc" stroke-width="1.1"/><rect x="1899" y="60" width="8" height="2" fill="#ccc"/><circle cx="1909" cy="60" r="3.5" fill="#ccc"/><path d="M1907 60H1911M1909 58V62" stroke="#444"/>

<rect x="1592" y="100" width="331" height="20" fill="#2c2c2c"/>
<rect x="1592" y="140" width="331" height="20" fill="#2c2c2c"/>
<use href="#coll" transform="translate(1621,90)"/>
<text x="1635" y="94" class="w" style="fill:#bcbcbc" textLength="88" lengthAdjust="spacingAndGlyphs">Scene Collection</text>
<path class="c" d="M1617 108.5l4 4 4-4"/>
<rect x="1631.5" y="100.5" width="19" height="19" rx="3.5" fill="#4a4a4a" stroke="#6a6a6a"/>
<use href="#coll" transform="translate(1641,110)"/>
<text x="1655" y="114" class="w" style="fill:#bcbcbc" textLength="53.5" lengthAdjust="spacingAndGlyphs">Collection</text>
<rect x="1858" y="105" width="10" height="10" rx="1.5" fill="#d0d0d0"/><path d="M1860 110l2 2.5 4-5" fill="none" stroke="#222" stroke-width="1.4"/>
<use href="#eye" x="1883" y="110"/><use href="#cam" x="1903" y="110"/>
<path d="M1620.5 123V174" stroke="#4e4e4e" stroke-width="1"/>

<path class="c" d="M1640 126l4 4-4 4"/>
<rect x="1652.5" y="120.5" width="19" height="19" rx="3.5" fill="#4a4a4a" stroke="#6a6a6a"/>
<use href="#ot" transform="translate(1661,130)"/>
<text x="1675.5" y="134" style="fill:#c2c2c2" textLength="35.5" lengthAdjust="spacingAndGlyphs">1st Jar</text>
<use href="#wr" x="1741" y="130"/><use href="#mt" x="1761" y="130"/><use href="#eye" x="1883" y="130"/><use href="#cam" x="1903" y="130"/>
<path class="c" d="M1640 146l4 4-4 4"/>
<use href="#ot" transform="translate(1661,150)"/>
<text x="1675.5" y="154" style="fill:#c2c2c2" textLength="39.5" lengthAdjust="spacingAndGlyphs">2nd Jar</text>
<use href="#wr" x="1745" y="150"/><use href="#mt" x="1765" y="150"/><use href="#eye" x="1883" y="150"/><use href="#cam" x="1903" y="150"/>
<path class="c" d="M1640 166l4 4-4 4"/>
<use href="#ot" transform="translate(1661,170)"/>
<text x="1675.5" y="174" style="fill:#c2c2c2" textLength="37.5" lengthAdjust="spacingAndGlyphs">3rd Jar</text>
<use href="#wr" x="1742" y="170"/><use href="#mt" x="1762" y="170"/><use href="#eye" x="1883" y="170"/><use href="#cam" x="1903" y="170"/>

<!-- PROPERTIES -->
<rect x="1592" y="379" width="331" height="680" rx="4" fill="#303030"/>
<rect x="1592" y="404" width="27" height="655" fill="#1f1f1f"/>
<rect x="1599" y="382" width="31" height="19" rx="4" fill="#2a2a2a"/>
<rect x="1604" y="385" width="14" height="5.5" rx="2.7" fill="#e4e4e4"/><rect x="1604" y="392" width="14" height="5.5" rx="2.7" fill="#e4e4e4"/><circle cx="1615" cy="387.8" r="2" fill="#333"/><circle cx="1607" cy="394.8" r="2" fill="#333"/>
<path class="c" d="M1621.5 390l2.5 2.5 2.5-2.5"/>
<rect x="1698" y="382" width="119" height="19" rx="4" fill="#222"/>
<circle cx="1712" cy="390" r="4.5" fill="none" stroke="#ccc" stroke-width="1.2"/><path d="M1709 393.5L1704 398" stroke="#ccc" stroke-width="1.2"/>
<text x="1724" y="395" class="d" textLength="35" lengthAdjust="spacingAndGlyphs">Search</text>
<rect x="1895" y="382" width="20" height="19" rx="4" fill="#2a2a2a"/><path class="c" d="M1901.5 390l3.5 3 3.5-3"/>

<!-- tabs -->
<rect x="1593" y="661" width="26" height="26" rx="4" fill="#303030"/>
<g class="i" stroke-width="1.3">
<path d="M1603 420V425M1600 427H1604L1603 434H1601ZM1610 424V434M1607 420Q1607 425 1610 425Q1613 425 1613 420" fill="none"/>
<path d="M1600 457H1603V455H1608V457H1613V467H1600Z"/><path d="M1600 460H1613M1608 460V467"/>
<path d="M1599 485H1613V490H1599ZM1601 490V496H1611V490"/>
<use href="#vl" transform="translate(1606,517) scale(.95)"/>
</g>
<rect x="1603" y="488" width="6" height="3" fill="#ccc"/>
<use href="#sc" transform="translate(1606,545)"/>
<circle cx="1606" cy="574" r="6.5" fill="#a0505c"/><path d="M1600 571Q1604 571 1605 574Q1603 578 1606 580M1608 568Q1607 572 1612 573" fill="none" stroke="#222" stroke-width="1.8"/>
<use href="#coll" transform="translate(1606,609)"/>
<path d="M1599 643V639H1603M1609 639H1613V643M1599 649V653H1603M1613 649V653H1609" fill="none" stroke="#8a6a4c" stroke-width="1"/><rect x="1602" y="642" width="8" height="8" fill="#d18b4c"/>
<path d="M1600 681L1605 676C1603 670 1608 665 1613 667L1609 671 1611 674 1615 670C1616 675 1612 679 1608 678L1603 683Q1600 684 1600 681Z" fill="#6f9cf0"/>
<g stroke="#4d74c0" stroke-width="1.3"><path d="M1602 697L1612 697M1602 697L1602 708M1602 697L1611 707"/></g>
<circle cx="1601.5" cy="697" r="2.5" fill="#6688cc"/><circle cx="1612" cy="697" r="1.5" fill="#4d74c0"/><circle cx="1602" cy="708" r="1.5" fill="#4d74c0"/><circle cx="1611" cy="707" r="2" fill="#4d74c0"/>
<circle cx="1606" cy="729" r="3" fill="#6688cc"/><path d="M1611 735A7 7 0 1 1 1604 722" fill="none" stroke="#4d74c0" stroke-width="1.4"/><circle cx="1611" cy="725" r="2" fill="#4d74c0"/>
<path d="M1600 758L1612 751Q1614 751 1612 756L1606 763Q1600 764 1600 758Z" fill="none" stroke="#6688cc" stroke-width="1.4"/><circle cx="1604" cy="759" r="2.5" fill="none" stroke="#6688cc" stroke-width="1.2"/>
<use href="#mt" transform="translate(1606,786)"/>
<circle cx="1606" cy="814" r="7" fill="#a85560"/><path d="M1606 807V814H1599A7 7 0 0 1 1606 807ZM1606 814H1613A7 7 0 0 1 1606 821Z" fill="#1f1f1f"/>

<!-- breadcrumbs -->
<path d="M1631 421V417H1635M1640 417H1644V421M1631 424V428H1635M1644 424V428H1640" fill="none" stroke="#bbb" stroke-width="1"/><rect x="1634" y="419" width="7" height="7" fill="#e6e6e6"/>
<text x="1653" y="426" class="m" textLength="36" lengthAdjust="spacingAndGlyphs">1st Jar</text>
<path class="c" d="M1707 418l4 4-4 4"/>
<use href="#smooth" transform="translate(1728,422)"/>
<text x="1744" y="426" class="m" textLength="93" lengthAdjust="spacingAndGlyphs">Smooth by Angle</text>
<use href="#pin" transform="translate(1905,422)"/>

<rect x="1627" y="449" width="287" height="18" rx="4" fill="#545454"/>
<path d="M1634.5 458H1644.5M1639.5 453V463" stroke="#e0e0e0" stroke-width="1.1"/>
<text x="1745" y="462" class="w" textLength="69" lengthAdjust="spacingAndGlyphs">Add Modifier</text>

<rect x="1627.5" y="478.5" width="287" height="105.5" rx="4" fill="#3d3d3d" stroke="#3d75c0" stroke-width="1.2"/>
<path class="c" d="M1636 489l4 3.5 4-3.5"/>
<use href="#smooth" transform="translate(1657,491)"/>
<rect x="1676" y="482" width="88" height="18" rx="3" fill="#1e1e1e"/>
<text x="1683" y="495.5" class="w" textLength="70" lengthAdjust="spacingAndGlyphs">Smooth by ...</text>
<rect x="1765" y="482" width="19" height="18" fill="#555"/><path d="M1769 486H1780L1774.5 496Z" fill="none" stroke="#e4e4e4" stroke-width="1.2"/><circle cx="1769" cy="486" r="1.4" fill="#e4e4e4"/><circle cx="1780" cy="486" r="1.4" fill="#e4e4e4"/><circle cx="1774.5" cy="496" r="1.4" fill="#e4e4e4"/>
<rect x="1785" y="482" width="19" height="18" fill="#4772b3"/><rect x="1789.5" y="486.5" width="10" height="9" fill="none" stroke="#d8d8d8" stroke-width="1"/><rect x="1797" y="484" width="5" height="5" fill="#f0f0f0"/>
<rect x="1805" y="482" width="19" height="18" fill="#4772b3"/><rect x="1808.5" y="485.5" width="12" height="8" fill="none" stroke="#f0f0f0" stroke-width="1.3"/><path d="M1811 497H1818M1814.5 494V497" stroke="#f0f0f0"/>
<rect x="1825" y="482" width="19" height="18" fill="#4772b3"/><path d="M1828 486H1831L1832 484H1837L1838 486H1841V497H1828Z" fill="#e4e4e4"/><circle cx="1834.5" cy="491" r="3" fill="#4772b3"/>
<path d="M1844 482H1861a3 3 0 0 1 3 3V497a3 3 0 0 1-3 3H1845Z" fill="#1e1e1e"/><path class="c" d="M1850.5 489l4 4 4-4"/>
<path d="M1871 487L1879 495M1879 487L1871 495" stroke="#d0d0d0" stroke-width="1.1"/>
<path d="M1902 484L1908 490 1905 491 1902 496 1900 494 1894 500 1899 493 1896 491 1901 488Z" fill="#e6e6e6"/>

<text x="1700" y="525" class="w" textLength="31" lengthAdjust="spacingAndGlyphs">Angle</text>
<rect x="1741" y="512" width="125" height="19" rx="4" fill="#545454"/>
<text x="1802" y="525.5" text-anchor="middle" class="w">30°</text>
<rect x="1867" y="512" width="19" height="19" rx="3" fill="#2e2e2e"/>
<path d="M1870 515H1875V520H1870ZM1877 515H1882V520H1877ZM1870 522H1875V528H1870ZM1877 522H1882V528H1877Z" fill="none" stroke="#d4d4d4" stroke-width=".6"/><path d="M1870 521H1884V524H1870ZM1874 515H1877V528H1874Z" fill="#e4e4e4"/>
<circle cx="1897" cy="521" r="1.7" fill="#d8d8d8"/>
<rect x="1741" y="540" width="12" height="12" rx="2" fill="#565656"/>
<text x="1757" y="550" class="w" textLength="95" lengthAdjust="spacingAndGlyphs">Ignore Sharpness</text>
<circle cx="1897" cy="546" r="1.7" fill="#d8d8d8"/>
<path class="c" d="M1643 567l4 4-4 4"/>
<text x="1657" y="575" class="w" textLength="41" lengthAdjust="spacingAndGlyphs">Manage</text>

<!-- TIMELINE -->
<rect x="3" y="984" width="1585" height="76" rx="4" fill="#1e1e1e"/>
<path d="M3 1009V988a4 4 0 0 1 4-4H1584a4 4 0 0 1 4 4V1009Z" fill="#303030"/>
<rect x="3" y="1032" width="1585" height="28" fill="#232323"/>
<rect x="61" y="1032" width="1469" height="28" fill="#2e2e2e"/>
<g transform="translate(0,1032)"><rect x="0" y="0" width="1588" height="28" fill="url(#ticks)"/></g>

<rect x="11" y="988" width="32" height="19" rx="4" fill="#2a2a2a"/>
<circle cx="21" cy="997.5" r="6.5" fill="#e6e6e6"/><path d="M21 993L18 998 22 1002Q16 1002 15 997.5Q16 993 21 993Z" fill="#333"/>
<path class="c" d="M33.5 996.5l2.5 2.5 2.5-2.5"/>
<rect x="48.5" y="988" width="131.5" height="19" rx="4" fill="#2a2a2a"/><path d="M120 988V1007" stroke="#3e3e3e"/>
<text x="56" y="1001.5" class="m" textLength="47" lengthAdjust="spacingAndGlyphs">Playback</text>
<path class="c" d="M110.5 996.5l2.5 2.5 2.5-2.5"/>
<text x="128" y="1001.5" class="m" textLength="34" lengthAdjust="spacingAndGlyphs">Keying</text>
<path class="c" d="M171.5 996.5l2.5 2.5 2.5-2.5"/>
<text x="190" y="1001.5" class="m" textLength="25" lengthAdjust="spacingAndGlyphs">View</text>
<text x="232" y="1001.5" class="m" textLength="35" lengthAdjust="spacingAndGlyphs">Marker</text>
<rect x="704" y="988" width="37" height="19" rx="4" fill="#2a2a2a"/>
<path d="M704 992a4 4 0 0 1 4-4H723V1007H708a4 4 0 0 1-4-4Z" fill="#545454"/>
<circle cx="713.5" cy="997.5" r="4.5" fill="none" stroke="#a2a2a2" stroke-width="1"/>
<path d="M729.5 996.5l2.5 2.5 2.5-2.5" fill="none" stroke="#666" stroke-width="1.1"/>
<rect x="749" y="988" width="118" height="19" rx="4" fill="#545454"/>
<path d="M768 988V1007M788 988V1007M807 988V1007M827 988V1007M847 988V1007" stroke="#3e3e3e"/>
<path d="M755 992.5V1002.5" stroke="#e6e6e6" stroke-width="1.5"/><path d="M763 992.5V1002.5L757 997.5Z" fill="#e6e6e6"/>
<path d="M772 997.5L776 994V1001ZM778 997.5L781 993.5L784 997.5L781 1001.5Z" fill="#e6e6e6"/><path d="M785 997.5L788 995V1000Z" fill="#e6e6e6"/>
<path d="M801 992V1003L793 997.5Z" fill="#e6e6e6"/>
<path d="M813 991V1004L823 997.5Z" fill="#e6e6e6"/>
<path d="M832 994L836 997.5L832 1001ZM839 993.5L842 997.5L839 1001.5L836.5 997.5Z" fill="#e6e6e6"/>
<path d="M853 992.5V1002.5L859 997.5Z" fill="#e6e6e6"/><path d="M861 992.5V1002.5" stroke="#e6e6e6" stroke-width="1.5"/>
<rect x="1308" y="988" width="74" height="19" rx="4" fill="#545454"/>
<text x="1344" y="1001.5" text-anchor="middle" class="w">39</text>
<rect x="1388" y="988" width="194" height="19" rx="4" fill="#545454"/>
<rect x="1388" y="988" width="19" height="19" rx="4" fill="#333"/>
<circle cx="1397" cy="998.5" r="5" fill="none" stroke="#dcdcdc" stroke-width="1.2"/><path d="M1397 995.5V999H1399.5M1394.5 992H1399.5M1397 992V993.5" fill="none" stroke="#dcdcdc"/>
<path d="M1495 988V1007" stroke="#3e3e3e"/>
<text x="1422" y="1001.5" class="w" textLength="24" lengthAdjust="spacingAndGlyphs">Start</text>
<text x="1479" y="1001.5" text-anchor="middle" class="w">1</text>
<text x="1512" y="1001.5" class="w" textLength="19" lengthAdjust="spacingAndGlyphs">End</text>
<text x="1547" y="1001.5" class="w" textLength="21" lengthAdjust="spacingAndGlyphs">250</text>

<!-- ruler labels -->
<g text-anchor="middle">
<text x="56" y="1025">0</text><text x="115" y="1025">10</text><text x="174" y="1025">20</text><text x="233" y="1025">30</text><text x="351" y="1025">50</text><text x="410" y="1025">60</text><text x="469" y="1025">70</text><text x="528" y="1025">80</text><text x="587" y="1025">90</text><text x="646" y="1025">100</text><text x="704.5" y="1025">110</text><text x="763.5" y="1025">120</text><text x="822.5" y="1025">130</text><text x="881.5" y="1025">140</text><text x="940.5" y="1025">150</text><text x="999.5" y="1025">160</text><text x="1058" y="1025">170</text><text x="1117" y="1025">180</text><text x="1176" y="1025">190</text><text x="1235" y="1025">200</text><text x="1294" y="1025">210</text><text x="1353" y="1025">220</text><text x="1412" y="1025">230</text><text x="1471" y="1025">240</text><text x="1530" y="1025">250</text>
</g>
<path d="M61 1037L65.5 1042.5 61 1048 56.5 1042.5Z" fill="#eee" stroke="#222" stroke-width=".8"/>
<rect x="13" y="1050" width="1566" height="8" rx="4" fill="#545454"/>
<circle cx="16.5" cy="1054" r="2.5" fill="#2e2e2e"/><circle cx="1575.5" cy="1054" r="2.5" fill="#2e2e2e"/>
<path d="M286 1030V1060" stroke="#4772b3" stroke-width="1.6"/>
<rect x="273.5" y="1012" width="25" height="17" rx="4" fill="#4772b3"/>
<text x="286" y="1025" text-anchor="middle" style="fill:#f0f0f0">39</text>
<path d="M5 1028l3 3.5-3 3.5" fill="none" stroke="#777" stroke-width="1"/>
<path d="M1586 1028l-3 3.5 3 3.5" fill="none" stroke="#888" stroke-width="1.1"/>

<!-- STATUS -->
<rect x="3" y="1060" width="1920" height="23" fill="#181818"/>
<rect x="13" y="1065" width="11" height="15" rx="4" fill="none" stroke="#a8a8a8" stroke-width="1"/><rect x="13" y="1065" width="6" height="7" rx="2" fill="#bcbcbc"/>
<path d="M26 1066V1071M28.5 1066V1070" stroke="#999" stroke-width="1"/>
<text x="33" y="1076" class="s" textLength="33" lengthAdjust="spacingAndGlyphs">Resize</text>
<rect x="77" y="1065" width="11" height="15" rx="4" fill="none" stroke="#a8a8a8" stroke-width="1"/><rect x="81" y="1065" width="4" height="7" fill="#bcbcbc"/>
<text x="92" y="1076" class="s" textLength="42" lengthAdjust="spacingAndGlyphs">Options</text>
<text x="1030" y="1076" class="s" textLength="822" lengthAdjust="spacingAndGlyphs">Collection | 1st Jar | Verts:33,054 | Faces:33,042 | Tris:66,084 | Objects:0/3 | Duration: 00:10+10 (Frame 39/250) | Memory: 62.0 MiB | VRAM: 1.5/4.0 GiB |</text>
<circle cx="1865" cy="1072" r="6" fill="none" stroke="#a8a8a8" stroke-width="1"/><path d="M1859 1072H1871M1865 1066V1078M1860.5 1069H1869.5M1860.5 1075H1869.5" stroke="#a8a8a8" stroke-width=".7"/>
<text x="1869" y="1081" class="s" style="font-size:8px">2</text>
<text x="1880" y="1076" class="s" textLength="30" lengthAdjust="spacingAndGlyphs">| 4.3.2</text>
</svg>
</body></html>
